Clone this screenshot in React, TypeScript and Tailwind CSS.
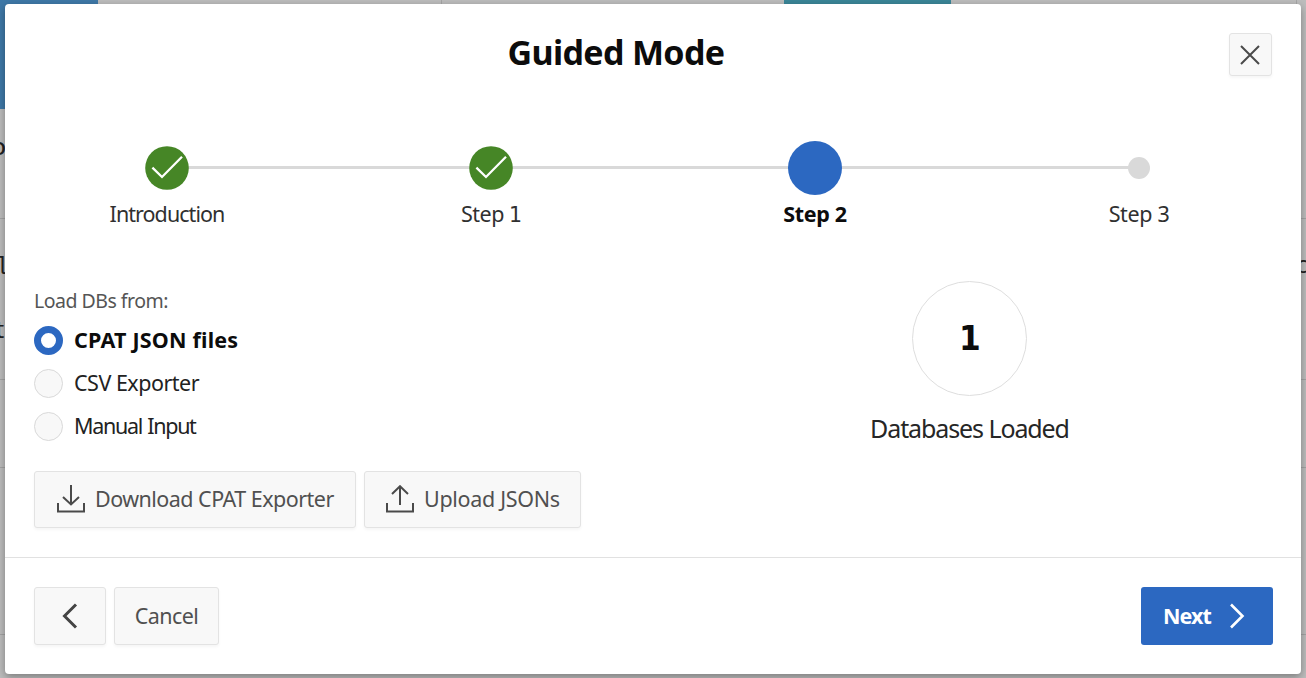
import React from "react";

const FONT = "font-['Noto_Sans','Open_Sans',sans-serif]";

function Check() {
  return (
    <svg width="44" height="44" viewBox="0 0 44 44" className="block">
      <circle cx="22" cy="22" r="21.8" fill="#468626" />
      <path d="M7.4 21.6 L17 31 L37 10.8" fill="none" stroke="#fff" strokeWidth="2.3" />
    </svg>
  );
}

function Step({
  label,
  digit,
  state,
  tracking,
}: {
  label: string;
  digit?: string;
  state: "done" | "current" | "future";
  tracking: string;
}) {
  return (
    <li className="flex w-[324px] flex-col items-center">
      <div className="flex h-[53px] items-center justify-center">
        {state === "done" && <Check />}
        {state === "current" && <span className="block size-[54px] shrink-0 rounded-full bg-[#2c68c1]" />}
        {state === "future" && <span className="block size-[22px] rounded-full bg-[#d9d9d9]" />}
      </div>
      <span
        className={`mt-[5px] h-[30px] text-[21.5px] leading-[30px] whitespace-nowrap ${tracking} ${
          state === "current" ? "font-bold text-[#0c0c0c]" : "text-[#303030]"
        }`}
      >
        {label}
        {digit && <span className="font-['DejaVu_Sans',sans-serif] text-[20.5px] leading-none tracking-[-1px]">{digit}</span>}
      </span>
    </li>
  );
}

function Radio({ label, checked, tracking }: { label: string; checked?: boolean; tracking: string }) {
  return (
    <label className="flex h-[43.2px] items-center gap-[11px]">
      <span
        className={`block size-[29px] shrink-0 rounded-full ${
          checked ? "border-[7px] border-[#2c68c1] bg-white" : "border border-[#d9d9d9] bg-[#f8f8f8]"
        }`}
      />
      <span
        className={`-mt-px text-[21.5px] leading-[30px] whitespace-nowrap ${tracking} ${
          checked ? "font-bold text-[#0c0c0c]" : "text-[#222]"
        }`}
      >
        {label}
      </span>
    </label>
  );
}

const BUTTON =
  "flex items-center rounded-[3px] border border-[#e3e3e3] bg-[#f8f8f8] text-[21.5px] leading-[30px] text-[#505050] whitespace-nowrap shadow-[0_2px_3px_rgba(0,0,0,0.04)]";

function Backdrop() {
  return (
    <div className="absolute inset-0 bg-[#bdbdbd] text-[24px] leading-[30px] text-[#222]">
      <div className="absolute top-0 left-0 h-[109px] w-[98px] bg-[#3f79a8]" />
      <div className="absolute top-0 left-[441px] h-4 w-px bg-[#a6a6a6]" />
      <div className="absolute top-0 left-[784px] h-4 w-[167px] bg-[#3b8698]" />
      <div className="absolute top-0 left-[1296px] h-4 w-px bg-[#a6a6a6]" />
      <div className="absolute top-[218px] h-px w-full bg-[#a4a4a4]" />
      <div className="absolute top-[379px] h-px w-full bg-[#a4a4a4]" />
      <div className="absolute top-[467px] h-px w-full bg-[#a4a4a4]" />
      <div className="absolute top-[634px] h-px w-full bg-[#a4a4a4]" />
      <span className="absolute top-[131px] left-[-8.5px] font-medium">o</span>
      <span className="absolute top-[253px] left-[-5px] font-['Liberation_Mono',monospace]">l</span>
      <span className="absolute top-[314px] left-[-4.5px]">t</span>
      <span className="absolute top-[249px] left-[1296px]">c</span>
    </div>
  );
}

export default function App() {
  return (
    <div className={`relative h-[678px] w-[1306px] overflow-hidden ${FONT}`}>
      <Backdrop />
      <div className="relative h-full px-[5px] pt-1 pb-[4px]">
        <section className="flex h-full w-full flex-col rounded-[4px] bg-white shadow-[0_3px_9px_rgba(0,0,0,0.35)]">
          <header className="grid h-[137px] grid-cols-[1fr_auto_1fr] items-start px-[29px]">
            <span />
            <h1 className="-ml-[74px] pt-[25px] text-[34px] leading-[46px] font-bold tracking-[-0.65px] whitespace-nowrap text-[#0c0c0c]">
              Guided Mode
            </h1>
            <button className="mt-[29px] flex size-[43px] items-center justify-center justify-self-end rounded-[3px] border border-[#e3e3e3] bg-[#f8f8f8] shadow-[0_2px_3px_rgba(0,0,0,0.04)]">
              <svg width="20" height="20" viewBox="0 0 20 20" className="-translate-x-px">
                <path d="M1 1 L19 19 M19 1 L1 19" stroke="#4a4a4a" strokeWidth="2" fill="none" />
              </svg>
            </button>
          </header>

          <div className="relative h-[140px]">
            <div className="absolute top-[25px] left-[162px] h-[3px] w-[972px] bg-[#d9d9d9]" />
            <ol className="relative flex">
              <Step label="Introduction" state="done" tracking="tracking-[-0.95px]" />
              <Step label="Step " digit="1" state="done" tracking="tracking-[-0.5px]" />
              <Step label="Step 2" state="current" tracking="tracking-[-0.35px]" />
              <Step label="Step 3" state="future" tracking="tracking-[-0.35px]" />
            </ol>
          </div>

          <div className="flex h-[276px] shrink-0 pl-[29px]">
            <div className="w-[612px] pt-[5px]">
              <p className="text-[19.5px] leading-[30px] tracking-[-0.5px] text-[#555]">Load DBs from:</p>
              <div className="mt-[3px] flex flex-col">
                <Radio label="CPAT JSON files" checked tracking="tracking-[0.2px]" />
                <Radio label="CSV Exporter" tracking="tracking-[-0.5px]" />
                <Radio label="Manual Input" tracking="tracking-[-1.3px] [word-spacing:1px]" />
              </div>
              <div className="mt-[22px] flex gap-2">
                <button className={`${BUTTON} h-[57px] w-[322px] pl-[22px]`}>
                  <svg width="28" height="28" viewBox="0 0 28 28" fill="none" stroke="#4a4a4a" strokeWidth="2" className="mr-[10px]">
                    <path d="M14 0 V19 M6 12 L14 19.5 L22 12 M1 18 V26.5 H27 V18" />
                  </svg>
                  <span className="-mt-px tracking-[-0.53px]">Download CPAT Exporter</span>
                </button>
                <button className={`${BUTTON} h-[57px] w-[217px] pl-[21px]`}>
                  <svg width="28" height="28" viewBox="0 0 28 28" fill="none" stroke="#4a4a4a" strokeWidth="2" className="mr-[10px]">
                    <path d="M14 20 V1 M6 9 L14 1.2 L22 9 M1 18 V26.5 H27 V18" />
                  </svg>
                  <span className="-mt-px tracking-[-0.3px]">Upload JSONs</span>
                </button>
              </div>
            </div>
            <div className="flex w-[647px] flex-col items-center">
              <div className="flex size-[115px] items-center justify-center rounded-full border border-[#dedede] text-[#0c0c0c]">
                <span className="-mt-[2px] scale-x-[0.92] font-['DejaVu_Sans',sans-serif] text-[34px] leading-[46px] font-bold">1</span>
              </div>
              <p className="mt-[14px] text-[25px] leading-[36px] tracking-[-1.1px] text-[#262626]">Databases Loaded</p>
            </div>
          </div>

          <footer className="flex flex-1 items-start border-t border-[#e1e1e1] pt-[29px] pr-[28px] pl-[29px]">
            <button className={`${BUTTON} h-[58px] w-[72px] justify-center`}>
              <svg width="16" height="26" viewBox="0 0 16 26" fill="none" stroke="#444" strokeWidth="3">
                <path d="M14 1.5 L2.5 13 L14 24.5" />
              </svg>
            </button>
            <button className={`${BUTTON} ml-2 h-[58px] w-[105px] justify-center`}>
              <span className="-mt-px tracking-[-0.6px]">Cancel</span>
            </button>
            <button className="ml-auto flex h-[58px] w-[132px] items-center rounded-[3px] bg-[#2c68c1] pl-[22px] text-[21.5px] leading-[30px] font-bold text-white">
              <span className="-mt-px w-[66px] text-left tracking-[-0.9px]">Next</span>
              <svg width="16" height="26" viewBox="0 0 16 26" fill="none" stroke="#fff" strokeWidth="2.6">
                <path d="M2 1.5 L13.5 13 L2 24.5" />
              </svg>
            </button>
          </footer>
        </section>
      </div>
    </div>
  );
}
